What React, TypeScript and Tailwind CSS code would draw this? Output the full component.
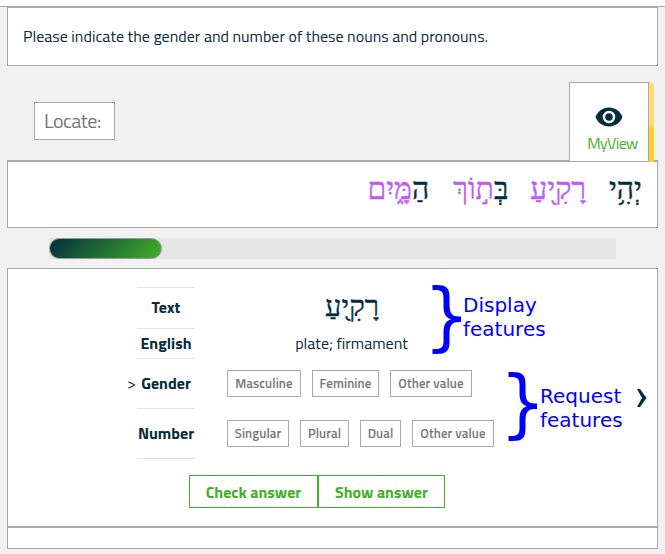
import React from "react";

const SANS = "font-['Titillium_Web',Roboto,'Open_Sans',sans-serif]";
const HEBREW = "font-['SBL_Hebrew','Liberation_Serif','DejaVu_Sans',serif]";

function Label({ text, className, active }: { text: string; className: string; active?: boolean }) {
  return (
    <div className={`relative flex w-[58px] items-center justify-center border-b border-[#e2e2e2] pb-[2px] text-[16px] font-bold whitespace-nowrap ${className}`}>
      {active && <span className="absolute -left-[10px] text-[16px] font-normal">&gt;</span>}
      {text}
    </div>
  );
}

function Choice({ text, className }: { text: string; className: string }) {
  return (
    <button className={`flex h-[27px] shrink-0 items-center justify-center border border-[#a9a9a9] text-[13px] font-semibold tracking-[0.1px] whitespace-nowrap text-[#777] ${className}`}>
      {text}
    </button>
  );
}

function Note({ first, className }: { first: string; className: string }) {
  return (
    <div className={`absolute flex font-['DejaVu_Sans',sans-serif] text-[#00f] ${className}`}>
      <svg className="h-[70px] w-[31px] shrink-0" viewBox="0 0 31 70">
        <path
          d="M0.500 0H4.500C14.500 0 17.500 3 17.500 12V19C17.500 28.500 20 31.500 27 31.500H29V37H27C20 37 17.500 40 17.500 49V56.500C17.500 66 14.500 69 4.500 69H0.500V64H3.500C9.500 64 11.500 62 11.500 56V48C11.500 39.500 13.500 36 19 34.200C13.500 32.500 11.500 29 11.500 20.500V13C11.500 7 9.500 5 3.500 5H0.500Z"
          fill="#00f"
        />
      </svg>
      <span className="pt-[8px] text-[20px] leading-6">
        {first}
        <br />
        features
      </span>
    </div>
  );
}

export default function App() {
  return (
    <div className={`relative h-[554px] w-[665px] overflow-hidden bg-[#f1f1f1] text-[#042c3c] ${SANS}`}>
      <div className="h-[7px] border-b border-[#a9a9a9] bg-white" />
      <div className="ml-[7px] w-[651px]">
        <div className="flex h-[59px] items-center border border-[#a9a9a9] bg-white pb-[2px] pl-[15px] text-[16px]">
          Please indicate the gender and number of these nouns and pronouns.
        </div>

        <div className="flex h-[94px] justify-between pt-4">
          <div className="mt-5 ml-[27px] flex h-[38px] w-[81px] items-center border border-[#a9a9a9] bg-white pl-[9px] text-[20px] tracking-[-0.5px] text-[#777]">
            Locate:
          </div>
          <div className="relative z-10 mr-1 flex h-20">
            <div className="flex w-20 flex-col items-center border border-[#a9a9a9] bg-white pt-6">
              <svg className="h-5 w-7" viewBox="0 0 28 20">
                <path d="M0.5 10C3 4 8 0.5 14 0.5S25 4 27.5 10C25 16 20 19.5 14 19.5S3 16 0.5 10Z" fill="#042c3c" />
                <circle cx="14" cy="10" r="5" fill="#042c3c" stroke="#fff" strokeWidth="2.5" />
              </svg>
              <span className="mt-[4px] ml-[7px] text-[16px] leading-6 tracking-[-0.6px] text-[#43b02a]">MyView</span>
            </div>
            <div className="flex w-[5px] flex-col overflow-hidden rounded-tr-[5px]">
              <div className="h-11 bg-[#ffdc73]" />
              <div className="flex-1 bg-[#ffcf33]" />
            </div>
          </div>
        </div>

        <div dir="rtl" className={`flex h-[68px] gap-[22px] border border-t-2 border-[#a9a9a9] bg-white pt-[8px] pr-[15px] text-[30px] leading-[38px] whitespace-nowrap [-webkit-text-stroke:0.4px] ${HEBREW}`}>
          <span>יְהִ֥י</span>
          <span className="mr-px text-[#bf5af2]">רָקִ֖יעַ</span>
          <span>בְּ<span className="text-[#bf5af2]">ת֣וֹךְ</span></span>
          <span className="mr-[2px]">הַ<span className="text-[#bf5af2]">מָּ֑יִם</span></span>
        </div>

        <div className="mt-[10px] ml-[42px] h-[21px] w-[567px] bg-[#e5e5e5]">
          <div className="h-full w-[113px] rounded-full border border-[#999] bg-[linear-gradient(135deg,#042c3c,#43b02a)]" />
        </div>

        <div className="mt-[9px] h-[259px] border border-[#a9a9a9] bg-white">
          <div className="ml-[129px] flex h-[190px] pt-[18px]">
            <div className="w-[58px] border-t border-[#e2e2e2]">
              <Label text="Text" className="h-[41px]" />
              <Label text="English" className="h-[30px]" />
              <Label text="Gender" className="h-[50px]" active />
              <Label text="Number" className="h-[50px]" />
            </div>
            <div className="ml-8 w-[267px]">
              <div className={`flex h-[42px] items-center justify-center pr-[17px] pb-[2px] text-[29px] [-webkit-text-stroke:0.4px] ${HEBREW}`} dir="rtl">
                <span>רָקִ֖יעַ</span>
              </div>
              <div className="flex h-[30px] items-center justify-center pr-[18px] pb-[2px] text-[16px]">plate; firmament</div>
              <div className="mt-[11px] flex gap-[11px]">
                <Choice text="Masculine" className="w-[74px]" />
                <Choice text="Feminine" className="w-[67px]" />
                <Choice text="Other value" className="w-[82px]" />
              </div>
              <div className="mt-[23px] flex gap-[11px]">
                <Choice text="Singular" className="w-[62px]" />
                <Choice text="Plural" className="w-[49px]" />
                <Choice text="Dual" className="w-[41px]" />
                <Choice text="Other value" className="w-[82px]" />
              </div>
            </div>
          </div>
          <div className="mt-4 ml-[181px] flex h-[33px] text-[16px] font-bold text-[#43b02a]">
            <button className="w-[129px] border border-[#43b02a]">Check answer</button>
            <button className="w-[127px] border border-[#43b02a]">Show answer</button>
          </div>
        </div>
        <div className="h-[22px] border border-[#a9a9a9] bg-white" />
      </div>

      <Note first="Display" className="top-[285px] left-[432px]" />
      <Note first="Request" className="top-[372px] left-[508px] [&>span]:ml-px [&>span]:pt-[12px]" />
      <svg className="absolute top-[389px] left-[636px] h-[18px] w-[11px]" viewBox="0 0 11 18">
        <path d="M1 0H4L10.500 9L4 18H1L6 9Z" fill="#042c3c" />
      </svg>
    </div>
  );
}
